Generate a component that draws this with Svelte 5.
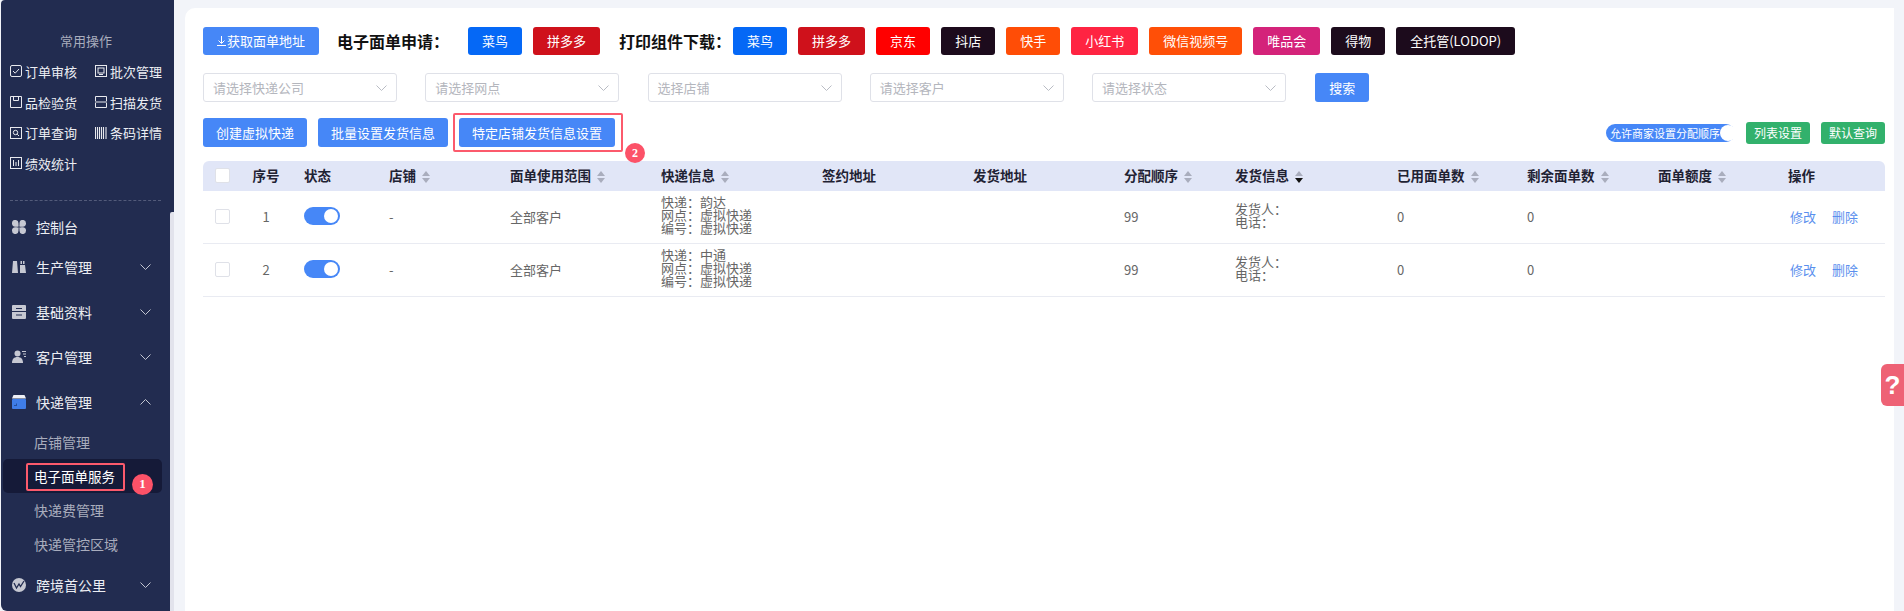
<script lang="ts">
  // Express waybill settings page: sidebar menu + toolbar + table.
  const quick = [
    { label: "订单审核", icon: "check" },
    { label: "批次管理", icon: "batch" },
    { label: "品检验货", icon: "box" },
    { label: "扫描发货", icon: "scan" },
    { label: "订单查询", icon: "search" },
    { label: "条码详情", icon: "bars" },
    { label: "绩效统计", icon: "chart" },
  ];
  const applyBtns = [
    { label: "菜鸟", color: "#0568f6" },
    { label: "拼多多", color: "#cf111b" },
  ];
  const downloadBtns = [
    { label: "菜鸟", color: "#0568f6" },
    { label: "拼多多", color: "#cf111b" },
    { label: "京东", color: "#ff0000" },
    { label: "抖店", color: "#1c0b1c" },
    { label: "快手", color: "#ff4d06" },
    { label: "小红书", color: "#ff2442" },
    { label: "微信视频号", color: "#ff4f07" },
    { label: "唯品会", color: "#d4237a" },
    { label: "得物", color: "#1c0b1c" },
    { label: "全托管(LODOP)", color: "#1c0b1c" },
  ];
  const selects = ["请选择快递公司", "请选择网点", "选择店铺", "请选择客户", "请选择状态"];
  const columns = [
    { label: "序号", w: 52, center: true },
    { label: "状态", w: 85 },
    { label: "店铺", w: 121, sort: true },
    { label: "面单使用范围", w: 151, sort: true },
    { label: "快递信息", w: 161, sort: true },
    { label: "签约地址", w: 151 },
    { label: "发货地址", w: 151 },
    { label: "分配顺序", w: 111, sort: true },
    { label: "发货信息", w: 162, sort: true, active: true },
    { label: "已用面单数", w: 130, sort: true },
    { label: "剩余面单数", w: 131, sort: true },
    { label: "面单额度", w: 130, sort: true },
    { label: "操作", w: 109 },
  ];
  const rows = [
    { no: 1, express: "韵达" },
    { no: 2, express: "中通" },
  ];
</script>

<div class="page">
  <aside class="sidebar">
    <div class="quick-title">常用操作</div>
    <div class="quick">
      {#each quick as q}
        <div class="quick-item">
          <svg width="12" height="12" viewBox="0 0 12 12" fill="none" stroke="#e8e9ee" stroke-width="1">
            {#if q.icon === "check"}
              <rect x="0.5" y="0.5" width="11" height="11" rx="1.5" /><path d="M3 6l2.2 2.2L9 4" />
            {:else if q.icon === "batch"}
              <rect x="0.5" y="0.5" width="11" height="11" /><rect x="3" y="3" width="6" height="5" /><path d="M4 9.5h4" />
            {:else if q.icon === "box"}
              <path d="M.5.5h11v11H.5zM3.5.5v4h5v-4" />
            {:else if q.icon === "scan"}
              <path d="M.5 5V.5h11V5M.5 7v4.5h11V7M0 6h12" />
            {:else if q.icon === "search"}
              <rect x="0.5" y="0.5" width="11" height="11" /><circle cx="5.5" cy="5.5" r="2.2" /><path d="M7.2 7.2L9 9" />
            {:else if q.icon === "bars"}
              <path d="M.5 0v12M2.5 0v12M4.5 0v12M6.5 0v12M8.5 0v12M11 0v12" stroke-width="1.1" />
            {:else}
              <rect x="0.5" y="0.5" width="11" height="11" /><path d="M3.5 3v6M6 5v4M8.5 3v6" />
            {/if}
          </svg>
          <span>{q.label}</span>
        </div>
      {/each}
    </div>
    <div class="divider"></div>

    <nav class="menu">
      <div class="item first">
        <svg width="14" height="14" viewBox="0 0 14 14" fill="#c6c8d2"><path d="M0 3.200a3.200 3.200 0 0 1 6.500 0c0 1.800.2 3.300.2 3.300s-1.700.3-3.500.3A3.200 3.200 0 0 1 0 3.200zM14 3.200a3.200 3.200 0 0 0-6.500 0c0 1.800-.2 3.300-.2 3.300s1.700.3 3.500.3A3.200 3.200 0 0 0 14 3.200zM0 10.800a3.200 3.200 0 0 0 6.500 0c0-1.800.2-3.300.2-3.300s-1.700-.3-3.500-.3A3.200 3.200 0 0 0 0 10.800zM14 10.800a3.200 3.200 0 0 1-6.500 0c0-1.800-.2-3.300-.2-3.300s1.700-.3 3.500-.3a3.200 3.200 0 0 1 3.200 3.600z" /></svg>
        <span>控制台</span>
      </div>
      <div class="item">
        <svg width="14" height="14" viewBox="0 0 14 14" fill="#c6c8d2"><path d="M1 1h4l1 12H0zM8 5h5l1 8H8zM8.5 1H10v3H8.5zM11 1h1.500v3H11z" /></svg>
        <span>生产管理</span>
        <svg class="chev" width="11" height="6" viewBox="0 0 11 6"><path d="M.5.5l5 5 5-5" /></svg>
      </div>
      <div class="item">
        <svg width="14" height="14" viewBox="0 0 14 14" fill="#c6c8d2"><path d="M1 0h12a1 1 0 0 1 1 1v5H0V1a1 1 0 0 1 1-1zM0 7h14v6a1 1 0 0 1-1 1H1a1 1 0 0 1-1-1z" /><path d="M4 3.5h6M4 10h6" stroke="#222c50" stroke-width="1.2" /></svg>
        <span>基础资料</span>
        <svg class="chev" width="11" height="6" viewBox="0 0 11 6"><path d="M.5.5l5 5 5-5" /></svg>
      </div>
      <div class="item">
        <svg width="14" height="14" viewBox="0 0 14 14" fill="#c6c8d2"><circle cx="5.5" cy="3.5" r="3" /><path d="M0 13c0-4 2-6 5.5-6S11 9 11 13z" /><path d="M10 1.500h4M11 4h3M12 6.500h2" stroke="#c6c8d2" stroke-width="1.1" /></svg>
        <span>客户管理</span>
        <svg class="chev" width="11" height="6" viewBox="0 0 11 6"><path d="M.5.5l5 5 5-5" /></svg>
      </div>
      <div class="item">
        <svg width="14" height="14" viewBox="0 0 14 14"><path d="M1.500 0h11L14 3.500H0z" fill="#eef0f6" /><rect y="4" width="14" height="10" rx="1" fill="#3f7de8" /><path d="M2 10h2V8.500h1V11H2z" fill="#25509f" /></svg>
        <span>快递管理</span>
        <svg class="chev" width="11" height="6" viewBox="0 0 11 6"><path d="M.5 5.500l5-5 5 5" /></svg>
      </div>
      <div class="sub">
        <div class="sub-item">店铺管理</div>
        <div class="sub-item active">
          <span>电子面单服务</span>
          <i class="mark"></i>
          <b class="badge one">1</b>
        </div>
        <div class="sub-item">快递费管理</div>
        <div class="sub-item">快递管控区域</div>
      </div>
      <div class="item">
        <svg width="14" height="14" viewBox="0 0 14 14"><circle cx="7" cy="7" r="7" fill="#c6c8d2" /><path d="M2 5l2.5 5L7 6l1.500 2.500L12 3" fill="none" stroke="#222c50" stroke-width="1.3" /></svg>
        <span>跨境首公里</span>
        <svg class="chev" width="11" height="6" viewBox="0 0 11 6"><path d="M.5.5l5 5 5-5" /></svg>
      </div>
    </nav>
    <i class="scrollbar"></i>
  </aside>

  <main class="panel">
    <div class="bar">
      <button class="btn primary">
        <svg width="9" height="10" viewBox="0 0 9 10" fill="none" stroke="#fff" stroke-width="1"><path d="M4.5 0v7M1.500 4.500l3 3 3-3M0 9.500h9" /></svg>获取面单地址
      </button>
      <strong class="lead">电子面单申请：</strong>
      {#each applyBtns as b}
        <button class="btn" style="background:{b.color}">{b.label}</button>
      {/each}
      <strong class="lead second">打印组件下载：</strong>
      {#each downloadBtns as b}
        <button class="btn" style="background:{b.color}">{b.label}</button>
      {/each}
    </div>

    <div class="filters">
      {#each selects as s}
        <div class="select">
          <span>{s}</span>
          <svg width="11" height="6" viewBox="0 0 11 6" fill="none" stroke="#b9bcc4"><path d="M.5.5l5 5 5-5" /></svg>
        </div>
      {/each}
      <button class="btn primary search">搜索</button>
    </div>

    <div class="actions">
      <button class="btn primary">创建虚拟快递</button>
      <button class="btn primary">批量设置发货信息</button>
      <button class="btn primary marked">
        特定店铺发货信息设置
        <i class="frame"></i>
        <b class="badge two">2</b>
      </button>
      <div class="right">
        <div class="allow"><span>允许商家设置分配顺序</span><i></i></div>
        <button class="btn green">列表设置</button>
        <button class="btn green">默认查询</button>
      </div>
    </div>

    <table>
      <colgroup>
        <col style="width:37px" />
        {#each columns as c}
          <col style="width:{c.w}px" />
        {/each}
      </colgroup>
      <thead>
        <tr>
          <th class="chk"><i class="box"></i></th>
          {#each columns as c}
            <th class:center={c.center}>
              {c.label}
              {#if c.sort}
                <span class="caret" class:active={c.active}><i></i><i></i></span>
              {/if}
            </th>
          {/each}
        </tr>
      </thead>
      <tbody>
        {#each rows as r}
          <tr>
            <td class="chk"><i class="box"></i></td>
            <td class="center">{r.no}</td>
            <td><span class="switch"><i></i></span></td>
            <td>-</td>
            <td>全部客户</td>
            <td class="tight">快递：{r.express}<br />网点：虚拟快递<br />编号：虚拟快递</td>
            <td></td>
            <td></td>
            <td>99</td>
            <td class="tight">发货人：<br />电话：</td>
            <td>0</td>
            <td>0</td>
            <td></td>
            <td class="ops"><a href="#edit">修改</a><a href="#del">删除</a></td>
          </tr>
        {/each}
      </tbody>
    </table>
  </main>

  <div class="help">?</div>
</div>

<style>
  :global(body) {
    margin: 0;
    background: #f2f4f9;
  }
  .page {
    display: flex;
    height: 611px;
    overflow: hidden;
    font-family: "Noto Sans CJK SC", "Liberation Sans", sans-serif;
    color: #666;
    position: relative;
  }
  i,
  b {
    font-style: normal;
  }

  .sidebar {
    position: relative;
    flex: none;
    width: 173px;
    margin-left: 1px;
    padding-top: 31px;
    box-sizing: border-box;
    background: #222c50;
    color: #eceef3;
    border-radius: 4px 0 0 6px;
  }
  .quick-title {
    width: 170px;
    text-align: center;
    font-size: 13px;
    line-height: 20px;
    color: #a9adbd;
  }
  .quick {
    display: grid;
    grid-template-columns: 85px 70px;
    grid-auto-rows: 30.7px;
    margin: 5px 0 0 9px;
  }
  .quick-item {
    display: flex;
    align-items: center;
    gap: 3px;
    font-size: 13px;
  }
  .divider {
    width: 151px;
    margin: 21px 0 0 9px;
    border-top: 1px dashed #535b7a;
  }
  .menu {
    display: flex;
    flex-direction: column;
    gap: 5px;
    margin-top: 6px;
  }
  .item {
    display: flex;
    align-items: center;
    height: 40px;
    padding-left: 11px;
    font-size: 14px;
    color: #eceef3;
    position: relative;
    flex: none;
  }
  .item > span {
    margin-left: 10px;
  }
  .item.first {
    margin-bottom: -5px;
  }
  .chev {
    position: absolute;
    left: 139px;
    top: 17px;
    fill: none;
    stroke: #c3c6d1;
  }
  .sub {
    display: flex;
    flex-direction: column;
    margin-top: -2px;
    margin-bottom: -1px;
  }
  .sub-item {
    height: 34px;
    padding-left: 33px;
    font-size: 14px;
    line-height: 34px;
    color: #a9adbd;
  }
  .sub-item.active {
    position: relative;
    height: 34px;
    margin: 0 12px 0 2px;
    padding-left: 31px;
    font-size: 13.5px;
    color: #fff;
    background: #151a38;
    border-radius: 5px;
  }
  .mark {
    position: absolute;
    left: 23px;
    top: 4px;
    width: 95px;
    height: 24px;
    border: 2px solid #fc5a6c;
    border-radius: 2px;
  }
  .badge {
    position: absolute;
    display: flex;
    align-items: center;
    justify-content: center;
    border-radius: 50%;
    background: #fc5268;
    color: #fff;
    font-family: "Liberation Serif", serif;
    font-weight: 700;
    font-size: 13px;
  }
  .badge.one {
    left: 129px;
    top: 15px;
    width: 21px;
    height: 21px;
  }
  .scrollbar {
    position: absolute;
    right: 0;
    top: 212px;
    bottom: 0;
    width: 4px;
    background: #e2e3ec;
    border-radius: 2px 0 0 0;
  }

  .panel {
    flex: none;
    width: 1709px;
    height: 603px;
    margin: 8px 0 0 11px;
    padding: 19px 9px 0 18px;
    box-sizing: border-box;
    background: #fff;
    border-radius: 10px 0 0 0;
  }
  .bar,
  .filters,
  .actions {
    display: flex;
    align-items: center;
  }
  .bar {
    gap: 11px;
    height: 28px;
  }
  .btn {
    height: 28px;
    padding: 0 13px;
    border: 0;
    border-radius: 3px;
    color: #fff;
    font: inherit;
    font-size: 13px;
    line-height: 28px;
    white-space: nowrap;
    cursor: pointer;
  }
  .bar .btn {
    padding: 0 14px;
  }
  .primary {
    background: #4687f7;
  }
  .primary svg {
    margin-right: 1px;
  }
  .lead {
    margin: 0 8px 0 7px;
    font-size: 16px;
    font-weight: 700;
    color: #111;
    white-space: nowrap;
  }
  .lead.second {
    margin-left: 8px;
    margin-right: -9px;
  }
  .filters {
    gap: 28.25px;
    margin-top: 18px;
  }
  .select {
    display: flex;
    align-items: center;
    justify-content: space-between;
    width: 194px;
    height: 29px;
    padding: 0 9px;
    box-sizing: border-box;
    border: 1px solid #dfe1e8;
    border-radius: 3px;
    color: #b4b6bd;
    font-size: 13px;
  }
  .search {
    height: 29px;
    padding: 0 14px;
    margin-left: 1px;
  }
  .actions {
    gap: 11px;
    margin-top: 16px;
    height: 29px;
  }
  .actions .btn {
    height: 29px;
  }
  .marked {
    position: relative;
  }
  .frame {
    position: absolute;
    left: -6px;
    right: -8px;
    top: -5px;
    bottom: -5px;
    border: 2px solid #fc5a6c;
    border-radius: 2px;
  }
  .badge.two {
    left: 166px;
    top: 25px;
    width: 20px;
    height: 20px;
    font-size: 12px;
  }
  .right {
    display: flex;
    align-items: center;
    gap: 11px;
    margin-left: auto;
  }
  .allow {
    display: flex;
    align-items: center;
    justify-content: space-between;
    width: 129px;
    height: 18px;
    padding: 0 1px 0 4px;
    box-sizing: border-box;
    background: #4687f7;
    border-radius: 9px;
    color: #fff;
    font-size: 11px;
    white-space: nowrap;
  }
  .allow i {
    flex: none;
    width: 16px;
    height: 16px;
    background: #fff;
    border-radius: 50%;
  }
  .actions .green {
    height: 22px;
    padding: 0 8px;
    background: #32b16c;
    font-size: 12px;
    line-height: 22px;
  }

  table {
    width: 1682px;
    margin-top: 14px;
    table-layout: fixed;
    border-collapse: separate;
    border-spacing: 0;
    font-size: 13px;
  }
  th {
    height: 30px;
    padding: 0 0 2px 12px;
    box-sizing: border-box;
    background: #e1e6f7;
    color: #1f2233;
    font-size: 13.5px;
    font-weight: 700;
    text-align: left;
    white-space: nowrap;
  }
  th:first-child {
    border-radius: 6px 0 0 0;
  }
  th:last-child {
    border-radius: 0 6px 0 0;
  }
  td {
    height: 53px;
    padding: 0 0 2px 12px;
    box-sizing: border-box;
    border-bottom: 1px solid #e9ebf2;
    color: #666;
    white-space: nowrap;
  }
  th.center,
  td.center {
    padding: 0 0 2px;
    text-align: center;
  }
  .tight {
    padding-bottom: 5px;
    line-height: 13px;
  }
  .box {
    display: block;
    width: 13px;
    height: 13px;
    background: #fff;
    border: 1px solid #dfe1e8;
    border-radius: 2px;
  }
  .caret {
    display: inline-flex;
    flex-direction: column;
    gap: 2px;
    margin-left: 3px;
    vertical-align: middle;
  }
  .caret i {
    width: 0;
    height: 0;
    border-left: 4.5px solid transparent;
    border-right: 4.5px solid transparent;
  }
  .caret i:first-child {
    border-bottom: 5px solid #a9adbd;
  }
  .caret i:last-child {
    border-top: 5px solid #a9adbd;
  }
  .caret.active i:last-child {
    border-top-color: #111;
  }
  .switch {
    display: flex;
    justify-content: flex-end;
    align-items: center;
    width: 36px;
    height: 18px;
    padding-right: 2px;
    box-sizing: border-box;
    background: #4687f7;
    border-radius: 9px;
  }
  .switch i {
    width: 14px;
    height: 14px;
    background: #fff;
    border-radius: 50%;
  }
  .ops {
    padding-left: 14px;
  }
  .ops a {
    margin-right: 16px;
    color: #5a8fee;
    text-decoration: none;
  }

  .help {
    position: absolute;
    right: 0;
    top: 364px;
    width: 23px;
    height: 42px;
    background: #ee6275;
    border-radius: 6px 0 0 6px;
    color: #fff;
    font: 700 26px/42px "Liberation Sans", sans-serif;
    text-align: center;
  }
</style>
